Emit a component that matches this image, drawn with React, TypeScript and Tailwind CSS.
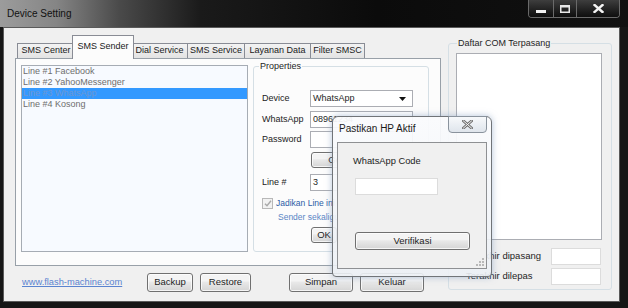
import React from "react";

function Btn({ className = "", children }: { className?: string; children?: React.ReactNode }) {
  return (
    <div
      className={
        "flex items-center justify-center rounded-[3px] border border-[#707070] bg-linear-to-b from-[#f4f4f4] from-40% via-[#e8e8e8] to-[#d5d5d5] text-[9.5px] text-[#1e1e1e] shadow-[inset_0_0_0_1px_rgba(255,255,255,0.75)] " +
        className
      }
    >
      {children}
    </div>
  );
}

function Field({ className = "", children }: { className?: string; children?: React.ReactNode }) {
  return (
    <div className={"flex h-[17px] items-center border border-[#abadb3] bg-white pl-[2px] text-[9px] text-[#1e1e1e] " + className}>
      {children}
    </div>
  );
}

const tabs = [
  { label: "SMS Center", w: "w-[58px]" },
  { label: "SMS Sender", w: "w-[62px]", active: true },
  { label: "Dial Service", w: "w-[57px]" },
  { label: "SMS Service", w: "w-[58px]" },
  { label: "Layanan Data", w: "w-[67px]" },
  { label: "Filter SMSC", w: "w-[55px]" },
];

const lines = ["Line #1 Facebook", "Line #2 YahooMessenger", "Line #3 WhatsApp", "Line #4 Kosong"];

export default function App() {
  return (
    <div className="relative flex h-[308px] w-[628px] flex-col overflow-hidden bg-[#161616] font-['Liberation_Sans',Arial,sans-serif]">
      {/* Title bar */}
      <div className="flex h-[27px] shrink-0 bg-[linear-gradient(90deg,#9c9c9c_0%,#858585_9%,#4a4a4a_19%,#1a1a1a_32%,#0b0b0b_60%,#111111_100%)]">
        <div className="pl-[7px] text-[10px] leading-[27px] text-[#111]">Device Setting</div>
        <div className="ml-auto mr-[8px] flex h-[18px] self-start overflow-hidden rounded-b-[4px] border border-t-0 border-[#6a6a6a]">
          <div className="flex w-[25px] items-end justify-center border-r border-[#6a6a6a] bg-linear-to-b from-[#3e3e3e] to-[#0e0e0e] pb-[4px]">
            <svg width="10" height="3" viewBox="0 0 10 3">
              <rect x="0" y="0" width="10" height="3" fill="#f2f2f2" />
            </svg>
          </div>
          <div className="flex w-[23px] items-center justify-center border-r border-[#6a6a6a] bg-linear-to-b from-[#3e3e3e] to-[#0e0e0e]">
            <svg width="10" height="8" viewBox="0 0 10 8">
              <rect x="0.75" y="0.75" width="8.5" height="6.5" fill="none" stroke="#e8e8e8" strokeWidth="1.5" />
              <rect x="0" y="0" width="10" height="2.5" fill="#e8e8e8" />
            </svg>
          </div>
          <div className="flex w-[42px] items-center justify-center bg-linear-to-b from-[#3e3e3e] to-[#0e0e0e]">
            <svg width="11" height="9" viewBox="0 0 11 9">
              <path d="M1.5 1 L9.5 8 M9.5 1 L1.5 8" stroke="#f4f4f4" strokeWidth="2.4" strokeLinecap="square" />
            </svg>
          </div>
        </div>
      </div>

      {/* Frame + client */}
      <div className="flex flex-1 pb-[6px] pl-[3px] pr-[8px]">
        <div className="flex flex-1 bg-[#f0f0f0] pl-[12px] pt-[8px] shadow-[inset_0_0_0_1px_#5a5a5a]">
          {/* Left column */}
          <div className="flex w-[426px] flex-col">
            {/* Tabs */}
            <div className="flex h-[23px] items-end pl-[2px]">
              {tabs.map((t, i) =>
                t.active ? (
                  <div
                    key={i}
                    className={
                      "relative z-10 -mb-px -ml-[3px] -mr-[2px] flex h-[24px] items-center justify-center border border-b-0 border-[#898c95] bg-[#fcfcfc] pb-[1px] text-[9px] text-[#1a1a1a] " +
                      t.w
                    }
                  >
                    {t.label}
                  </div>
                ) : (
                  <div
                    key={i}
                    className={
                      "flex h-[15px] items-center justify-center border border-b-0 border-[#898c95] bg-linear-to-b from-[#f3f3f3] to-[#e3e3e3] text-[9px] text-[#1a1a1a] " +
                      (i > 0 ? "-ml-px " : "") +
                      t.w
                    }
                  >
                    {t.label}
                  </div>
                )
              )}
            </div>

            {/* Tab panel */}
            <div className="flex h-[208px] border border-[#98a0a8] bg-[#fcfcfc] pl-[5px] pt-[2px]">
              <div className="mt-[4px] h-[187px] w-[227px] border border-[#a6acb4] bg-[#f7faff]">
                {lines.map((l, i) => (
                  <div
                    key={i}
                    className={
                      "h-[11px] pl-[1px] text-[9px] leading-[11px] " +
                      (i === 2 ? "bg-[#3399ff] text-[#6d97d2]" : "text-[#6e6e6e]")
                    }
                  >
                    {l}
                  </div>
                ))}
              </div>

              <fieldset className="ml-[5px] h-[191px] w-[176px] rounded-[3px] border border-[#d5dfe5]">
                <legend className="ml-[5px] px-[1px] text-[9px] leading-[11px] text-[#1e1e1e]">Properties</legend>
                <div className="flex flex-col text-[9px] text-[#222]">
                  <div className="mt-[18px] flex h-[17px] items-center">
                    <div className="w-[56px] pl-[8px]">Device</div>
                    <Field className="w-[103px] justify-between">
                      <span>WhatsApp</span>
                      <svg className="mr-[6px]" width="7" height="4" viewBox="0 0 7 4">
                        <path d="M0 0 H7 L3.5 4 Z" fill="#111" />
                      </svg>
                    </Field>
                  </div>
                  <div className="mt-[4px] flex h-[17px] items-center">
                    <div className="w-[56px] pl-[8px]">WhatsApp</div>
                    <Field className="w-[103px]">08961234</Field>
                  </div>
                  <div className="mt-[3px] flex h-[17px] items-center">
                    <div className="w-[56px] pl-[8px]">Password</div>
                    <Field className="w-[103px]" />
                  </div>
                  <div className="mt-[4px] flex h-[16px] items-center pl-[57px]">
                    <Btn className="h-[16px] w-[50px]">Get</Btn>
                  </div>
                  <div className="mt-[6px] flex h-[17px] items-center">
                    <div className="w-[56px] pl-[8px]">Line #</div>
                    <Field className="w-[103px]">3</Field>
                  </div>
                  <div className="mt-[7px] flex h-[11px] items-center pl-[8px]">
                    <div className="flex h-[11px] w-[11px] items-center justify-center border border-[#b8b8b8] bg-[#f2f2f2]">
                      <svg width="8" height="7" viewBox="0 0 8 7">
                        <path d="M1 3.8 L3 5.8 L7 0.8" fill="none" stroke="#a8a8a8" strokeWidth="1.4" />
                      </svg>
                    </div>
                    <span className="ml-[3px] whitespace-nowrap text-[8.5px] text-[#2d5da6]">Jadikan Line ini sebagai default</span>
                  </div>
                  <div className="mt-[3px] h-[10px] whitespace-nowrap pl-[24px] text-[8.5px] leading-[10px] text-[#5a86c6]">
                    Sender sekaligus
                  </div>
                  <div className="mt-[5px] flex h-[16px] items-center pl-[57px]">
                    <Btn className="h-[16px] w-[26px]">OK</Btn>
                  </div>
                </div>
              </fieldset>
            </div>

            {/* Bottom row */}
            <div className="mt-[7px] flex h-[19px] items-center">
              <div className="ml-[7px] w-[125px] text-[9.3px] text-[#5b84d0] underline">www.flash-machine.com</div>
              <Btn className="h-[19px] w-[46px]">Backup</Btn>
              <Btn className="ml-[7px] h-[19px] w-[51px]">Restore</Btn>
              <Btn className="ml-[38px] h-[19px] w-[64px]">Simpan</Btn>
              <Btn className="ml-[7px] h-[19px] w-[64px]">Keluar</Btn>
            </div>
          </div>

          {/* Right group */}
          <fieldset className="ml-[7px] mt-[3px] h-[252px] w-[164px] rounded-[3px] border border-[#d5dfe5]">
            <legend className="ml-[8px] px-[1px] text-[9px] leading-[11px] text-[#1e1e1e]">Daftar COM Terpasang</legend>
            <div className="ml-[7px] mt-[4px] h-[187px] w-[146px] border border-[#abadb3] bg-white" />
            <div className="mt-[8px] flex h-[17px] items-center">
              <div className="flex-1 pl-[17px] text-[9.5px] text-[#1e1e1e]">Terakhir dipasang</div>
              <div className="mr-[10px] h-[17px] w-[50px] border border-[#dcdcdc] bg-white" />
            </div>
            <div className="mt-[3px] flex h-[17px] items-center">
              <div className="flex-1 pl-[17px] text-[9.5px] text-[#1e1e1e]">Terakhir dilepas</div>
              <div className="mr-[10px] h-[17px] w-[50px] border border-[#dcdcdc] bg-white" />
            </div>
          </fieldset>
        </div>
      </div>

      {/* Dialog */}
      <div className="absolute left-[332px] top-[116px] flex h-[161px] w-[160px] flex-col rounded-t-[6px] rounded-b-[4px] border border-[#707478] bg-[linear-gradient(180deg,rgba(250,251,253,0.94)_0%,rgba(236,240,245,0.9)_100%)] shadow-[0_0_7px_rgba(120,150,190,0.55)]">
        <div className="flex h-[25px] shrink-0">
          <div className="pl-[6px] text-[10px] leading-[23px] text-[#1a1a1a]">Pastikan HP Aktif</div>
          <div className="-mt-px ml-auto mr-[4px] flex h-[17px] w-[39px] items-center justify-center rounded-b-[4px] border border-[#8a939d] bg-linear-to-b from-[#f7f9fb] to-[#dfe5ec]">
            <svg width="11" height="9" viewBox="0 0 11 9">
              <path d="M1.5 1 L9.5 8 M9.5 1 L1.5 8" stroke="#6e6e6e" strokeWidth="2.8" strokeLinecap="square" />
              <path d="M1.5 1 L9.5 8 M9.5 1 L1.5 8" stroke="#f8f8f8" strokeWidth="1" strokeLinecap="square" />
            </svg>
          </div>
        </div>
        <div className="mx-[4px] flex h-[127px] flex-col border border-[#8e9093] bg-[#f0f0f0]">
          <div className="ml-[15px] mt-[13px] text-[9.3px] leading-[11px] text-[#222]">WhatsApp Code</div>
          <div className="ml-[17px] mt-[11px] h-[17px] w-[83px] border border-[#dcdcdc] bg-white" />
          <Btn className="ml-[17px] mt-[37px] h-[18px] w-[115px]">Verifikasi</Btn>
          <div className="mt-auto flex justify-end pb-[1px] pr-[1px]">
            <svg width="9" height="9" viewBox="0 0 9 9">
              <rect x="6" y="0" width="2" height="2" fill="#b8b8b8" />
              <rect x="3" y="3" width="2" height="2" fill="#b8b8b8" />
              <rect x="6" y="3" width="2" height="2" fill="#b8b8b8" />
              <rect x="0" y="6" width="2" height="2" fill="#b8b8b8" />
              <rect x="3" y="6" width="2" height="2" fill="#b8b8b8" />
              <rect x="6" y="6" width="2" height="2" fill="#b8b8b8" />
            </svg>
          </div>
        </div>
      </div>
    </div>
  );
}
